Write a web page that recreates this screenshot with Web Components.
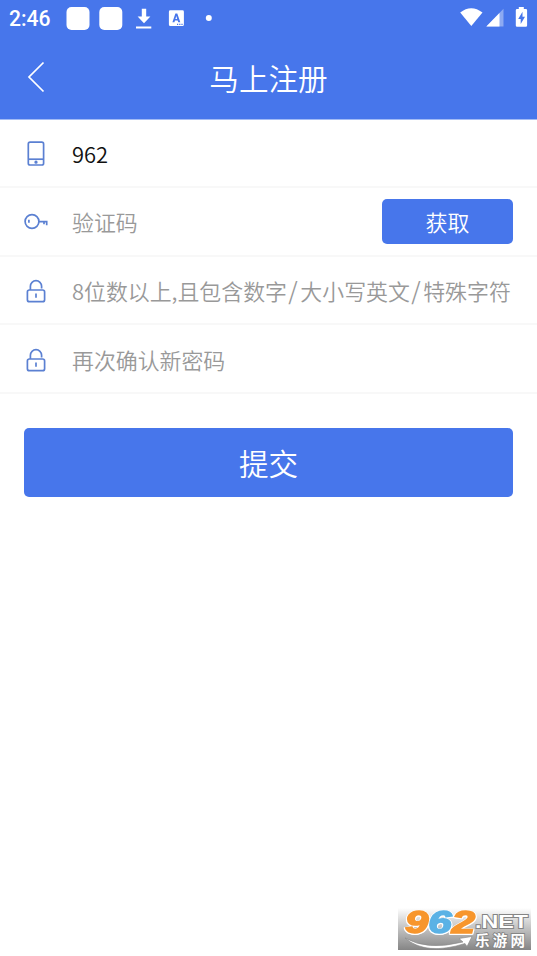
<!DOCTYPE html>
<html lang="zh-CN"><head><meta charset="utf-8"><title>马上注册</title>
<style>
body{margin:0;background:#fff;font-family:"Noto Sans CJK SC",sans-serif}
</style></head><body>
<register-page></register-page>
<script>
const define=(name,html)=>customElements.define(name,class extends HTMLElement{
  constructor(){super();this.attachShadow({mode:'open'}).innerHTML=html;}
});
define('status-bar',`<style>
:host{display:flex;height:36px;background:#4776eb;color:#fff}
svg{display:block}
text{font:500 21.5px Roboto,sans-serif}
</style>
<svg width="537" height="36" fill="#fff">
<text x="9" y="26" textLength="41.5" lengthAdjust="spacingAndGlyphs">2:46</text>
<rect x="66.5" y="7" width="23" height="23" rx="5"/><rect x="99.3" y="7" width="23" height="23" rx="5"/>
<path d="M141.8 8.8h4.4v7.7h4.2l-6.4 6.7-6.4-6.7h4.2zM136 26.4h15.3v2H136z"/>
<path fill-rule="evenodd" d="M170.3 10.3h12.2q1.4 0 1.4 1.4v12.8q0 1.6-1.4 1.6h-12.2q-1.4 0-1.4-1.6V11.7q0-1.4 1.4-1.4zM175.4 13.6l-3 8.6h2l.6-1.7h2.7l.6 1.7h2l-3-8.6zm.9 2.4.9 2.9h-1.8zM177 23.7v1.3h1.2v-1.3zm2.2 0v1.3h1.2v-1.3zm2.2 0v1.3h1.2v-1.3z"/>
<circle cx="208.8" cy="18" r="3"/>
<path d="M460.2 12.5q11-8.5 22.3 0L471.3 26z"/>
<path d="M503.5 8.8V26.5H486.3z" opacity=".38"/><path d="M499.5 12.9V26.5H486.3z"/>
<path fill-rule="evenodd" d="M518.8 7h5v2h2q1.3 0 1.3 1.3v15.2q0 1.3-1.3 1.3h-8.7q-1.3 0-1.3-1.3V10.3Q515.8 9 517.1 9h1.7zM522.5 11.7l-4.3 7.3h2.5v5l4.3-7.3h-2.5z"/>
</svg>`);
define('nav-bar',`<style>
:host{display:grid;grid-template-columns:72px 1fr 72px;height:84px;align-items:center;background:linear-gradient(#4776eb 83px,#a3bbf5 83px);color:#fff;box-sizing:border-box}
svg{display:block;margin:-2px 0 0 24px}
h1{margin:0;text-align:center;font-weight:350;font-size:29.6px;line-height:44px}
</style><svg width="24" height="34" fill="none" stroke="#fff" stroke-width="1.7"><path d="M19.5 2.5 5 17l14.5 14.5"/></svg><h1><slot></slot></h1>`);
define('form-row',`<style>
:host{display:flex;height:68.6px;box-sizing:border-box;align-items:center;padding:3px 24px 0;border-bottom:2px solid #f8f8f8;color:#999;font-size:21.9px;font-weight:350;white-space:nowrap}
.i{width:24px;margin-right:24px;flex:none}
.t{flex:1;line-height:32px}
</style><div class="i"><slot name="icon"></slot></div><div class="t"><slot></slot></div><slot name="action"></slot>`);
const icon=(name,body)=>define(name,`<style>:host{display:block}svg{display:block}</style><svg width="24" height="28" fill="none" stroke="#5b80d2" stroke-width="1.7">${body}</svg>`);
icon('phone-icon','<rect x="4.3" y="2.2" width="15.3" height="22.8" rx="1.8"/><path d="M4.3 19.2h15.3"/><circle cx="12" cy="22.2" r=".8"/>');
icon('key-icon','<circle cx="8" cy="13.5" r="6.9"/><path d="M15 13.7h7.7v3.5M20 13.7v2.5M4.9 11.7v3"/>');
icon('lock-icon','<rect x="3.4" y="13" width="17.2" height="11.7" rx="2"/><path d="M6.4 13V9.3a5.6 5.6 0 0 1 11.2 0v2.2M12 16.5v4.3"/>');
define('app-button',`<style>
:host{display:block}
button{display:flex;align-items:center;justify-content:center;width:100%;height:100%;border:0;border-radius:5px;background:#4776eb;color:#fff;font:inherit;padding:0}
</style><button><slot></slot></button>`);
define('site-badge',`<style>:host{display:block;width:133px;height:42px}svg{display:block;overflow:visible}
.n{font:italic 900 31px "Liberation Sans",sans-serif;stroke-width:1.6;filter:drop-shadow(1px 0 0 #fff) drop-shadow(-1px 0 0 #fff) drop-shadow(0 1px 0 #fff)}
.o{fill:#f7962d;stroke:#f7962d}.b{fill:#5bb2e5;stroke:#5bb2e5}
.e{font:700 19px "Liberation Sans",sans-serif}.c{font:700 14.5px "Noto Sans CJK SC",sans-serif}
.e,.c{fill:#fff;stroke:#858585;stroke-width:1.8;paint-order:stroke}
</style><svg width="133" height="42"><defs><linearGradient id="g" x2="0" y2="1"><stop stop-color="#fff"/><stop offset=".3" stop-color="#d8d8d8"/><stop offset="1" stop-color="#858585"/></linearGradient></defs>
<rect width="133" height="42" fill="url(#g)"/>
<path d="M7 30Q29 43 65 34l-4-3.5 13-2-5 10-2-3Q28 48 7 30z" fill="#fff" stroke="#888" stroke-width=".6"/>
<text class="n" x="7" y="25" textLength="70" lengthAdjust="spacingAndGlyphs"><tspan class="o">9</tspan><tspan class="b">6</tspan><tspan class="o">2</tspan></text>
<text class="e" x="77" y="19.5" textLength="53" lengthAdjust="spacingAndGlyphs">.NET</text>
<text class="c" x="77" y="37.5" textLength="50">乐游网</text></svg>`);
define('register-page',`<style>
:host{display:flex;flex-direction:column;height:956px;width:537px;overflow:hidden}
.num{height:68px;color:#111;padding-top:2px}
.code{padding-top:1.4px}
.get{width:131px;height:45px}
.submit{margin:34.2px 24px 0;height:68.8px;font-size:29.6px;font-weight:350}
site-badge{margin:auto 6px 6px auto}
.s{font-size:24px;line-height:1;letter-spacing:2.6px;margin-left:1.4px}
</style>
<status-bar></status-bar><nav-bar>马上注册</nav-bar>
<form-row class="num"><phone-icon slot="icon"></phone-icon>962</form-row>
<form-row class="code"><key-icon slot="icon"></key-icon>验证码<app-button class="get" slot="action">获取</app-button></form-row>
<form-row><lock-icon slot="icon"></lock-icon>8位数以上,且包含数字<span class="s">/</span>大小写英文<span class="s">/</span>特殊字符</form-row>
<form-row><lock-icon slot="icon"></lock-icon>再次确认新密码</form-row>
<app-button class="submit">提交</app-button>
<site-badge></site-badge>`);
</script></body></html>
